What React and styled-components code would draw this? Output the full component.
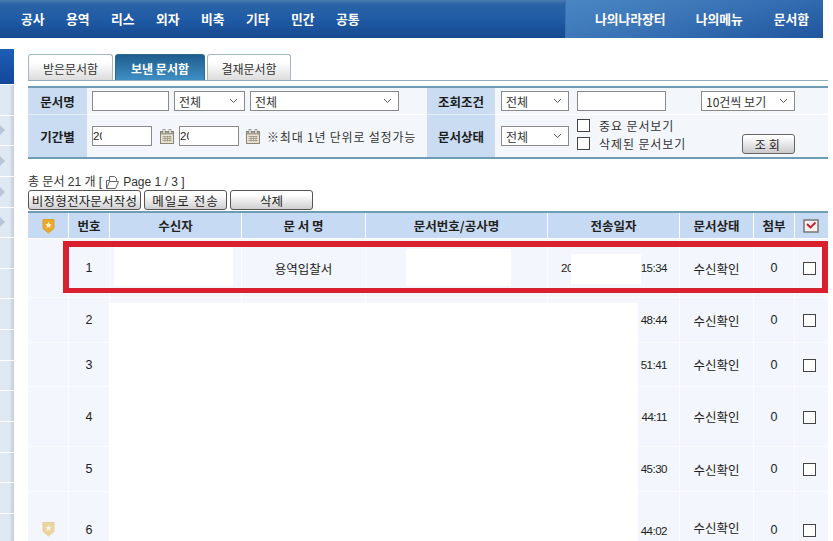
import React from "react";
import styled, { createGlobalStyle } from "styled-components";

const Global = createGlobalStyle`
  html, body { margin: 0; padding: 0; background: #fff; }
  body {
    width: 833px; height: 541px; overflow: hidden;
    font-family: "Noto Sans CJK KR", "Liberation Sans", sans-serif;
    font-size: 12.5px; color: #222;
  }
  * { box-sizing: border-box; }
`;

const Header = styled.header`
  display: flex; width: 823px; height: 38px;
  background: linear-gradient(180deg, #4a7cae 0, #2a64a6 4px, #1f5ba6 50%, #17498f 100%);
`;
const MainNav = styled.nav`
  flex: 1; display: flex; align-items: center; gap: 21px; padding: 0 0 0 21px;
`;
const NavItem = styled.span`
  width: 24px; white-space: nowrap; color: #fff; font-weight: 700; font-size: 12.8px; line-height: 1;
`;
const SideNav = styled.nav`
  width: 258px; display: flex; align-items: center; padding: 0 0 0 29px;
  background: linear-gradient(165deg, #4a86c4 0, #3a74b6 45%, #1f559f 100%);
  border-left: 1px solid #3d72b0;
`;
const SideItem = styled.span`
  color: #fff; font-weight: 700; font-size: 12.8px; line-height: 1; white-space: nowrap;
  margin-right: ${p => p.$gap}px;
`;

const Body = styled.div`display: flex; height: 503px;`;
const Sidebar = styled.aside`
  width: 14px; padding-top: 11px; display: flex; flex-direction: column;
`;
const SideHead = styled.div`
  height: 35px; flex: none; margin-bottom: 1px;
  background: linear-gradient(180deg, #1d5fb5, #13479c);
`;
const SideRow = styled.div`
  height: 30.65px; flex: none; display: flex; align-items: center;
  border-bottom: 1px solid #fff;
  background: linear-gradient(90deg, #dfe9f4 0, #dfe9f4 9px, #c3ccd6 14px);
`;
const SideArrow = styled.i`
  width: 0; height: 0; border-left: 5px solid #b9c5d2;
  border-top: 5px solid transparent; border-bottom: 5px solid transparent;
`;

const Main = styled.main`width: 800px; margin-left: 14px; padding-top: 16px; flex: none;`;
const Tabs = styled.div`
  display: flex; gap: 2px; height: 27px; border-bottom: 1px solid #8eaebd;
`;
const Tab = styled.div`
  width: ${p => p.$w}px; height: 26px; display: flex; align-items: center; justify-content: center;
  border: 1px solid ${p => (p.$active ? "#2f6a8e" : "#9fb9c6")}; border-bottom: 0;
  border-radius: 3px 3px 0 0; font-size: 12px; padding-top: 1px;
  background: ${p => (p.$active ? "linear-gradient(180deg,#1f5d8e,#3f8fc4)" : "linear-gradient(180deg,#fff 30%,#dcdcdc)")};
  color: ${p => (p.$active ? "#fff" : "#333")};
  font-weight: ${p => (p.$active ? 700 : 400)};
`;
const Filter = styled.section`
  margin-top: 5px; height: 73px; display: grid;
  grid-template-columns: 59px 340px 68px 333px; grid-template-rows: 27px 42px;
  border-top: 2px solid #6f9db5; border-bottom: 2px solid #6f9db5;
`;
const FLabel = styled.div`
  display: flex; align-items: center; justify-content: center;
  background: #c9dcf2; font-weight: 700; font-size: 12.5px; color: #1d1d1d;
  ${p => p.$top && "border-bottom: 1px solid #e6eef8;"}
`;
const FCell = styled.div`
  display: flex; align-items: center; background: #f3f7fc; padding-left: ${p => p.$pl || 5}px;
  ${p => p.$top && "border-bottom: 1px solid #fff;"}
`;
const TextBox = styled.div`
  width: ${p => p.$w}px; height: 20px; flex: none; background: #fff; border: 1px solid #8a8a8a;
  margin-right: ${p => p.$mr || 0}px; margin-left: ${p => p.$ml || 0}px;
  font-family: "Liberation Sans", sans-serif; font-size: 11.5px; line-height: 19px; overflow: hidden; color: #222;
`;
const ClippedValue = styled.span`display: block; width: 9px; overflow: hidden;`;
const Select = styled.div`
  width: ${p => p.$w}px; height: 20px; flex: none; background: #fff; border: 1px solid #8a8a8a;
  margin-right: ${p => p.$mr || 0}px; margin-left: ${p => p.$ml || 0}px;
  display: flex; align-items: center; justify-content: space-between; padding: 0 6px 0 4px;
  font-size: 12px; color: #333;
`;
const Chevron = () => (
  <svg width="9" height="6" viewBox="0 0 9 6"><path d="M1 1l3.5 3.5L8 1" fill="none" stroke="#555" strokeWidth="1" /></svg>
);
const Calendar = styled(({ className }) => (
  <svg className={className} width="14" height="15" viewBox="0 0 14 15">
    <rect x="0.5" y="2.5" width="13" height="12" fill="#e8e2d2" stroke="#8b8573" />
    <rect x="1" y="3" width="12" height="2.5" fill="#a9a290" />
    <rect x="3" y="0.5" width="2" height="4" fill="#fff" stroke="#777" strokeWidth="0.6" />
    <rect x="9" y="0.5" width="2" height="4" fill="#fff" stroke="#777" strokeWidth="0.6" />
    <path d="M2.5 7.5h9M2.5 9.5h9M2.5 11.5h9M5 7v5.5M7.5 7v5.5M10 7v5.5" stroke="#9b9584" strokeWidth="0.8" fill="none" />
  </svg>
))`
  flex: none; margin: 0 ${p => p.$mr}px 0 ${p => p.$ml}px;
`;
const Hint = styled.span`font-size: 12px; white-space: nowrap; color: #333; letter-spacing: 0.8px;`;
const ChecksArea = styled.div`
  display: flex; flex-direction: column; gap: 5px; margin-left: 8px; margin-top: -3px;
`;
const CheckLine = styled.label`
  display: flex; align-items: center; gap: 9px; height: 13px; font-size: 12px; color: #333; letter-spacing: 0.9px; white-space: nowrap;
`;
const Box = styled.span`
  display: inline-block; flex: none; width: 13px; height: 13px; background: #fff; border: 1px solid #444;
`;
const SearchBtn = styled.div`
  width: 53px; height: 20px; margin-left: 56px; margin-top: 16px; flex: none;
  display: flex; align-items: center; justify-content: center; letter-spacing: 3px;
  border: 1px solid #666; border-radius: 3px; font-size: 12px;
  background: linear-gradient(180deg, #fff 10%, #c9c9c9);
`;

const Summary = styled.div`
  margin-top: 16px; height: 15px; display: flex; align-items: center; gap: 3px;
  font-size: 12px; letter-spacing: 0; line-height: 15px; color: #333; white-space: nowrap;
  font-family: "Liberation Sans", "Noto Sans CJK KR", sans-serif;
`;
const Buttons = styled.div`display: flex; gap: 3px; height: 20px;`;
const Btn = styled.div`
  width: ${p => p.$w}px; height: 20px; display: flex; align-items: center; justify-content: center;
  border: 1px solid #555; border-radius: 3px; font-size: 12.5px; color: #222; white-space: nowrap;
  letter-spacing: ${p => p.$ls || 0}px;
  background: linear-gradient(180deg, #fff 20%, #cfcfcf);
`;

const TableWrap = styled.div`position: relative; margin-top: 1px; height: 330px;`;
const Table = styled.table`
  width: 800px; table-layout: fixed; border-collapse: separate; border-spacing: 0;
  border-top: 2px solid #6f9db5;
`;
const Th = styled.th`
  height: 26px; padding: 0; background: #c7daf3; font-size: 12.5px; font-weight: 700; color: #222;
  border-right: 1px solid #fff; border-bottom: 1px solid #fff;
  &:last-child { border-right: 0; padding-right: 2px; }
`;
const Row = styled.tr`height: ${p => p.$h}px;`;
const Td = styled.td`
  padding: 0; background: #f3f6fc; text-align: center; font-size: 12.5px; color: #222;
  border-right: 1px solid #fbfcfe; border-bottom: 1px solid #fbfcfe;
  font-family: "Liberation Sans", "Noto Sans CJK KR", sans-serif;
  vertical-align: middle;
  &:last-child { border-right: 0; }
`;
const IconTd = styled(Td)`vertical-align: bottom; padding-bottom: 28px;`;
const LowTd = styled(Td)`${p => p.$low && "vertical-align: bottom; padding-bottom: 28px;"}`;
const TimeCell = styled(LowTd)`text-align: right; padding-right: 12px; font-size: 11.5px; letter-spacing: -0.5px;`;
const DateRow = styled.div`display: flex; justify-content: space-between; padding-left: 13px;`;
const CheckCell = styled(LowTd)`padding-right: 4px;`;
const CellBox = styled(Box)`display: block; margin: 1px auto 0;`;

const Mask = styled.div`
  position: absolute; background: #fff;
  left: ${p => p.$x}px; top: ${p => p.$y}px; width: ${p => p.$w}px; height: ${p => p.$h}px;
`;
const RedBox = styled.div`
  position: absolute; left: 35px; top: 30px; width: 765px; height: 52px;
  border: 6px solid #d9202e; border-bottom-width: 5px;
`;

const Shield = ({ faded }) => (
  <svg width="13" height="16" viewBox="0 0 13 16" style={{ display: "block", margin: "0 auto", opacity: faded ? 0.45 : 1 }}>
    <path d="M1 1.5h11v9l-5.5 4.500L1 10.500z" fill="#e8a92e" stroke="#dca02a" />
    <path d="M6.500 3.800l1 2.200 2.300.2-1.800 1.500.6 2.300-2.100-1.200-2.100 1.200.6-2.300-1.800-1.500 2.300-.2z" fill="#fff3c4" />
  </svg>
);
const PageIcon = () => (
  <svg width="15" height="13" viewBox="0 0 15 13">
    <path d="M4.500 .5h5l2 2v3h2l-3 7H1.500l3-7zM4.500 5.500h7M1.500 12.500v-8h3" fill="none" stroke="#666" strokeWidth="1" />
  </svg>
);
const HeadCheck = () => (
  <svg width="16" height="14" viewBox="0 0 16 14" style={{ display: "block", margin: "0 auto" }}>
    <rect x="1" y="1" width="14" height="12" fill="#fbeff0" stroke="#777" strokeWidth="1.500" />
    <path d="M4 5l3.500 3.500 5-5" fill="none" stroke="#c8202c" strokeWidth="1.800" />
  </svg>
);

const cols = [41, 41, 132, 124, 182, 132, 74, 41, 33];
const menu = ["공사", "용역", "리스", "외자", "비축", "기타", "민간", "공통"];
const heads = ["", "번호", "수신자", "문 서 명", "문서번호/공사명", "전송일자", "문서상태", "첨부", ""];
const rows = [
  { n: 1, h: 59, time: "15:34", name: "용역입찰서", date: "20" },
  { n: 2, h: 45, time: "48:44" },
  { n: 3, h: 44, time: "51:41" },
  { n: 4, h: 60, time: "44:11" },
  { n: 5, h: 45, time: "45:30" },
  { n: 6, h: 74, time: "44:02", shield: true, low: true },
];

export default function App() {
  return (
    <>
      <Global />
      <Header>
        <MainNav>{menu.map(m => <NavItem key={m}>{m}</NavItem>)}</MainNav>
        <SideNav>
          <SideItem $gap={30}>나의나라장터</SideItem>
          <SideItem $gap={31}>나의메뉴</SideItem>
          <SideItem $gap={0}>문서함</SideItem>
        </SideNav>
      </Header>
      <Body>
        <Sidebar>
          <SideHead />
          {Array.from({ length: 15 }, (_, i) => (
            <SideRow key={i}>{i >= 1 && i < 5 && <SideArrow />}</SideRow>
          ))}
        </Sidebar>
        <Main>
          <Tabs>
            <Tab $w={85}>받은문서함</Tab>
            <Tab $w={90} $active>보낸 문서함</Tab>
            <Tab $w={84}>결재문서함</Tab>
          </Tabs>
          <Filter>
            <FLabel $top>문서명</FLabel>
            <FCell $top>
              <TextBox $w={77} $mr={5} />
              <Select $w={71} $mr={5}>전체<Chevron /></Select>
              <Select $w={149}>전체<Chevron /></Select>
            </FCell>
            <FLabel $top>조회조건</FLabel>
            <FCell $top $pl={6}>
              <Select $w={68} $mr={8}>전체<Chevron /></Select>
              <TextBox $w={89} $mr={35} />
              <Select $w={94}>10건씩 보기<Chevron /></Select>
            </FCell>
            <FLabel>기간별</FLabel>
            <FCell $pl={5}>
              <TextBox $w={60}><ClippedValue>20</ClippedValue></TextBox>
              <Calendar $ml={8} $mr={5} />
              <TextBox $w={60}><ClippedValue>20</ClippedValue></TextBox>
              <Calendar $ml={7} $mr={7} />
              <Hint>※최대 1년 단위로 설정가능</Hint>
            </FCell>
            <FLabel>문서상태</FLabel>
            <FCell $pl={6}>
              <Select $w={68}>전체<Chevron /></Select>
              <ChecksArea>
                <CheckLine><Box />중요 문서보기</CheckLine>
                <CheckLine><Box />삭제된 문서보기</CheckLine>
              </ChecksArea>
              <SearchBtn>조회</SearchBtn>
            </FCell>
          </Filter>
          <Summary>총 문서 21 개 [ <PageIcon /> Page 1 / 3 ]</Summary>
          <Buttons>
            <Btn $w={113} $ls={0.2}>비정형전자문서작성</Btn>
            <Btn $w={83} $ls={1}>메일로 전송</Btn>
            <Btn $w={83}>삭제</Btn>
          </Buttons>
          <TableWrap>
            <Table>
              <colgroup>{cols.map((w, i) => <col key={i} width={w} />)}</colgroup>
              <thead>
                <tr>
                  {heads.map((h, i) => (
                    <Th key={i}>{i === 0 ? <Shield /> : i === 8 ? <HeadCheck /> : h}</Th>
                  ))}
                </tr>
              </thead>
              <tbody>
                {rows.map(r => (
                  <Row key={r.n} $h={r.h}>
                    <IconTd>{r.shield && <Shield faded />}</IconTd>
                    <LowTd $low={r.low}>{r.n}</LowTd>
                    <Td />
                    <Td>{r.name}</Td>
                    <Td />
                    <TimeCell $low={r.low}>
                      {r.date ? <DateRow><span>{r.date}</span><span>{r.time}</span></DateRow> : r.time}
                    </TimeCell>
                    <LowTd $low={r.low}>수신확인</LowTd>
                    <LowTd $low={r.low}>0</LowTd>
                    <CheckCell $low={r.low}><CellBox /></CheckCell>
                  </Row>
                ))}
              </tbody>
            </Table>
            <Mask $x={86} $y={36} $w={119} $h={39} />
            <Mask $x={378} $y={38} $w={105} $h={37} />
            <Mask $x={543} $y={43} $w={70} $h={30} />
            <Mask $x={81} $y={92} $w={529} $h={238} />
            <RedBox />
          </TableWrap>
        </Main>
      </Body>
    </>
  );
}
